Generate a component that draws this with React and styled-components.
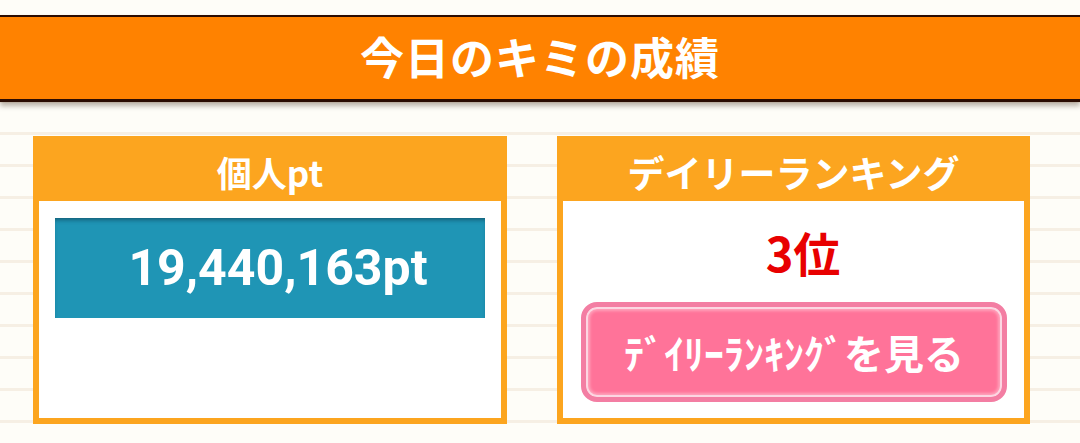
import React from "react";
import styled, { createGlobalStyle } from "styled-components";

const GlobalStyle = createGlobalStyle`
  html, body {
    margin: 0;
    padding: 0;
  }
  body {
    width: 1080px;
    height: 443px;
    overflow: hidden;
    font-family: "Noto Sans CJK JP", "Noto Sans", sans-serif;
    background-color: #fefdf8;
    background-image: repeating-linear-gradient(
      to bottom,
      #fefdf8 0px,
      #fefdf8 29px,
      #f6efe4 29px,
      #f6efe4 32px
    );
    background-position: 0 7px;
  }
`;

const Page = styled.div`
  padding-top: 15px;
`;

const Heading = styled.h1`
  box-sizing: border-box;
  margin: 0;
  height: 87px;
  padding-bottom: 4px;
  display: flex;
  align-items: center;
  justify-content: center;
  background: #ff8200;
  border-top: 2px solid #2b0c02;
  border-bottom: 3px solid #2b0c02;
  box-shadow: 0 4px 5px rgba(60, 40, 20, 0.35);
  color: #fff;
  font-size: 44px;
  font-weight: 700;
  letter-spacing: 1px;
`;

const Cards = styled.div`
  display: grid;
  grid-template-columns: 474px 473px;
  column-gap: 50px;
  padding: 34px 0 0 33px;
`;

const Card = styled.section`
  box-sizing: border-box;
  height: 288px;
  border: 6px solid #fca51f;
  background: #fff;
  display: flex;
  flex-direction: column;
`;

const CardTitle = styled.h2`
  margin: 0;
  height: 59px;
  display: flex;
  align-items: center;
  justify-content: center;
  background: #fca51f;
  color: #fff;
  font-size: ${(p) => p.$size || 35}px;
  font-weight: 700;
`;

const CardBody = styled.div`
  flex: 1;
  display: flex;
  flex-direction: column;
  align-items: stretch;
  padding: ${(p) => p.$pad};
`;

const ScoreBox = styled.div`
  height: 100px;
  padding-left: 16px;
  display: flex;
  align-items: center;
  justify-content: center;
  background: #1f95b5;
  box-shadow: inset 0 4px 4px -2px rgba(10, 50, 70, 0.55);
  color: #fff;
  font-family: Roboto, "Noto Sans", sans-serif;
  font-size: 50px;
  font-weight: 700;
`;

const Rank = styled.div`
  height: 60px;
  display: flex;
  align-items: center;
  justify-content: center;
  padding-left: 18px;
  color: #e80000;
  font-size: 47px;
  font-weight: 700;
  margin-bottom: 21px;
`;

const RankButton = styled.button`
  box-sizing: border-box;
  height: 100px;
  margin: 0;
  border: 5px solid #f37ea3;
  border-radius: 16px;
  background: #ff7399;
  box-shadow: inset 0 0 0 2px #fcd6e2, inset 0 0 3px 4px rgba(255, 255, 255, 0.35);
  color: #fff;
  font-family: "Noto Sans CJK JP", sans-serif;
  font-size: 40px;
  font-weight: 700;
  display: flex;
  align-items: center;
  justify-content: center;
  cursor: pointer;
`;

export default function App() {
  return (
    <>
      <GlobalStyle />
      <Page>
        <Heading>今日のキミの成績</Heading>
        <Cards>
          <Card>
            <CardTitle>個人pt</CardTitle>
            <CardBody $pad="17px 16px 0 16px">
              <ScoreBox>19,440,163pt</ScoreBox>
            </CardBody>
          </Card>
          <Card>
            <CardTitle $size={37}>デイリーランキング</CardTitle>
            <CardBody $pad="20px 17px 0 18px">
              <Rank>3位</Rank>
              <RankButton>ﾃﾞｲﾘｰﾗﾝｷﾝｸﾞを見る</RankButton>
            </CardBody>
          </Card>
        </Cards>
      </Page>
    </>
  );
}
